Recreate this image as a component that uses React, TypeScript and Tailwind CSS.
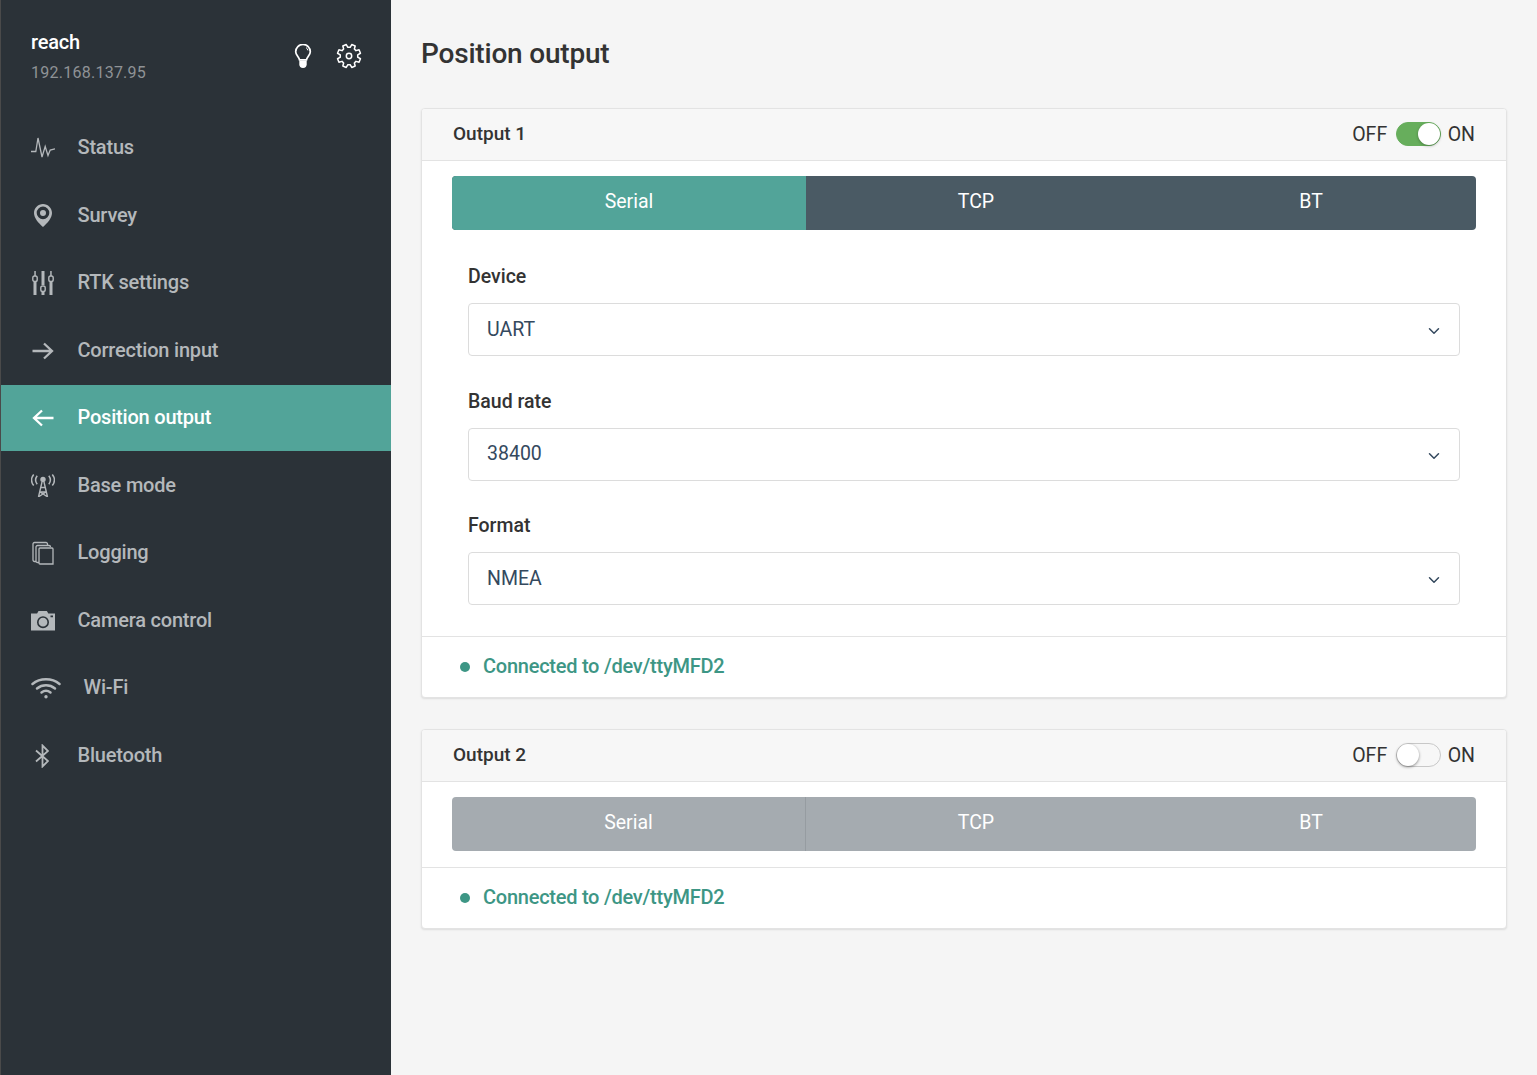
import { useState } from "react";
import { ChevronDown } from "lucide-react";

function PulseIcon() {
  return (
    <svg width="24" height="22" viewBox="0 0 24 22" fill="none" stroke="currentColor" strokeWidth="1.3">
      <path d="M0 14.5h4.800L7 1l4 19 3.200-10.500 2.800 9 2.200-5.500 4.800-1.200" />
    </svg>
  );
}

function PinIcon() {
  return (
    <svg width="18" height="23" viewBox="0 0 18 23" fill="currentColor">
      <path
        fillRule="evenodd"
        d="M9 0C4 0 0 4 0 9c0 5 4.500 10 9 14 4.500-4 9-9 9-14 0-5-4-9-9-9zm0 2.600a6.300 6.300 0 1 1 0 12.600A6.300 6.300 0 0 1 9 2.600zm0 3.300a3 3 0 1 0 0 6 3 3 0 0 0 0-6z"
      />
    </svg>
  );
}

function SlidersIcon() {
  return (
    <svg width="22" height="24" viewBox="0 0 22 24" fill="currentColor">
      <rect x="2.300" y="0" width="1.500" height="5" />
      <rect x="1.500" y="11" width="3" height="13" />
      <rect x="9.500" y="0" width="3" height="14" />
      <rect x="9.500" y="21" width="3" height="3" />
      <rect x="18.200" y="0" width="1.500" height="5" />
      <rect x="17.500" y="11" width="3" height="13" />
      <g fill="none" stroke="currentColor" strokeWidth="1.400">
        <rect x="0.800" y="5" width="4.400" height="5.500" rx="1.800" />
        <rect x="8.800" y="15" width="4.400" height="5.500" rx="1.800" />
        <rect x="16.800" y="5" width="4.400" height="5.500" rx="1.800" />
      </g>
    </svg>
  );
}

function TowerIcon() {
  return (
    <svg width="24" height="23" viewBox="0 0 24 23" fill="none" stroke="currentColor">
      <g strokeWidth="1.500">
        <path d="M2.700.5c-2.600 3.300-2.600 7.700 0 11" />
        <path d="M6.200 1.800c-1.900 2.500-1.900 6 0 8.500" />
        <path d="M21.300.5c2.600 3.300 2.600 7.700 0 11" />
        <path d="M17.800 1.800c1.900 2.500 1.900 6 0 8.500" />
      </g>
      <circle cx="12" cy="5.500" r="2.700" fill="currentColor" stroke="none" />
      <path d="M11 8 7.500 23M13 8l3.500 15M9.800 13.500h4.400M8.800 18h6.400M8 22.500l7-4.500M16 22.500l-7-4.500" strokeWidth="1.400" />
    </svg>
  );
}

function CopiesIcon() {
  return (
    <svg width="22" height="24" viewBox="0 0 22 24" fill="none" stroke="currentColor" strokeWidth="1.300">
      <path d="M4 20.500H2.500a1.500 1.500 0 0 1-1.500-1.500V3A1.500 1.500 0 0 1 2.500 1.500H14a1.500 1.500 0 0 1 1.500 1.500v1.500" />
      <path d="M7 21.500H5.500A1.500 1.500 0 0 1 4 20V6a1.500 1.500 0 0 1 1.500-1.500H17a1.500 1.500 0 0 1 1.500 1.500" />
      <path d="M8 7h12a1 1 0 0 1 1 1v15H8a1 1 0 0 1-1-1V8a1 1 0 0 1 1-1z" />
    </svg>
  );
}

function CameraIcon() {
  return (
    <svg width="24" height="20" viewBox="0 0 24 20" fill="currentColor">
      <path
        fillRule="evenodd"
        d="M7.500 0h8.400l1.400 2.500H24V19.500H0V2.500h6.100zM12 5.200a6 6 0 1 0 0 12 6 6 0 0 0 0-12zm0 1.600a4.400 4.400 0 1 1 0 8.800 4.400 4.400 0 0 1 0-8.800zM19.500 4.500v1.700h2.500V4.500z"
      />
    </svg>
  );
}

function WifiIcon() {
  return (
    <svg width="30" height="22" viewBox="0 0 30 22" fill="none" stroke="currentColor" strokeWidth="2.500" strokeLinecap="round">
      <path d="M1.500 7C9 .8 21 .8 28.500 7" />
      <path d="M6 11.500c5.200-4.200 12.800-4.200 18 0" />
      <path d="M10.500 15.500c2.800-2.200 6.200-2.200 9 0" />
      <circle cx="15" cy="19.800" r="1.700" fill="currentColor" stroke="none" />
    </svg>
  );
}

function BluetoothIcon() {
  return (
    <svg className="-ml-[2px]" width="14" height="24" viewBox="0 0 14 24" fill="none" stroke="currentColor" strokeWidth="1.800">
      <path d="M1 6.500 13 17l-5.500 5.500v-21L13 7 1 17.500" />
    </svg>
  );
}

function ArrowIcon({ left }: { left?: boolean }) {
  return (
    <svg width="22" height="18" viewBox="0 0 22 18" fill="none" stroke="currentColor" strokeWidth="2.300">
      {left ? <path d="M21.500 9H2M10 1.500 2 9l8 7.500" /> : <path d="M.5 9H20M12 1.500 20 9l-8 7.500" />}
    </svg>
  );
}

function BulbIcon() {
  return (
    <svg width="18" height="24" viewBox="0 0 18 24" fill="none" stroke="currentColor" strokeWidth="1.700">
      <path d="M5.500 15.800C4.800 12.800 1.700 11 1.700 7.700a7.300 7.300 0 0 1 14.600 0c0 3.300-3.100 5.100-3.800 8.100z" />
      <path d="M12 3.600c1 .6 1.700 1.600 1.900 2.800" strokeWidth="1" />
      <path d="M5.300 16.500h7.400v3.800a3.700 3.700 0 0 1-7.400 0z" fill="currentColor" stroke="none" />
    </svg>
  );
}

// 8 teeth, same outline as the reference's cog
function gearPath() {
  const pts: string[] = [];
  const at = (r: number, deg: number) => {
    const a = (deg * Math.PI) / 180;
    return `${(13 + r * Math.cos(a)).toFixed(2)} ${(13 + r * Math.sin(a)).toFixed(2)}`;
  };
  for (let i = 0; i < 8; i++) {
    const c = i * 45 + 22.5;
    pts.push(at(8.8, c - 15), at(11.8, c - 9), at(11.8, c + 9), at(8.8, c + 15));
  }
  return "M" + pts.join("L") + "Z";
}

function GearIcon() {
  return (
    <svg width="26" height="26" viewBox="0 0 26 26" fill="none" stroke="currentColor" strokeWidth="1.500" strokeLinejoin="round">
      <path d={gearPath()} />
      <circle cx="13" cy="13" r="2.700" />
    </svg>
  );
}

const navItems = [
  { label: "Status", icon: <PulseIcon /> },
  { label: "Survey", icon: <PinIcon /> },
  { label: "RTK settings", icon: <SlidersIcon /> },
  { label: "Correction input", icon: <ArrowIcon /> },
  { label: "Position output", icon: <ArrowIcon left />, active: true },
  { label: "Base mode", icon: <TowerIcon /> },
  { label: "Logging", icon: <CopiesIcon /> },
  { label: "Camera control", icon: <CameraIcon /> },
  { label: "Wi-Fi", icon: <WifiIcon />, wide: true },
  { label: "Bluetooth", icon: <BluetoothIcon /> },
];

function Sidebar() {
  return (
    <aside className="w-[391px] shrink-0 bg-[#2b3238] border-l border-[#4a4a4a] min-h-[1075px]">
      <div className="flex items-start justify-between pl-[30px] pr-[29px] h-[115px] pt-[30px]">
        <div>
          <div className="text-[20px] leading-[24px] font-medium text-white tracking-[-0.2px]">reach</div>
          <div className="mt-[7px] text-[16px] leading-[24px] text-[#8f9396] tracking-[0.25px]">192.168.137.95</div>
        </div>
        <div className="flex items-center gap-[24px] mt-[13px] text-white">
          <BulbIcon />
          <GearIcon />
        </div>
      </div>
      <nav className="flex flex-col gap-[1.5px]">
        {navItems.map((item) => (
          <div
            key={item.label}
            className={
              item.active
                ? "flex items-center h-[66px] pl-[30px] bg-[#52a499] text-white"
                : "flex items-center h-[66px] pl-[30px] text-[#b4b8bb]"
            }
          >
            <span className={item.wide ? "flex items-center w-[52.5px]" : "flex items-center justify-center w-[24px] mr-[22.5px]"}>
              {item.icon}
            </span>
            <span className="mb-[2px] text-[20px] leading-[24px] font-medium tracking-[-0.2px]">{item.label}</span>
          </div>
        ))}
      </nav>
    </aside>
  );
}

function Toggle({ on }: { on: boolean }) {
  return (
    <div className="flex items-center text-[19.5px] leading-[24px] text-[#333]">
      <span>OFF</span>
      <span
        className={
          on
            ? "relative ml-[9px] mr-[6.5px] mb-[2px] h-[24px] w-[45px] rounded-full border border-[#67ae5c] bg-[#67ae5c]"
            : "relative ml-[9px] mr-[6.5px] mb-[2px] h-[24px] w-[45px] rounded-full border border-[#c8c8c8] bg-[#f7f7f7]"
        }
      >
        <span
          className={
            on
              ? "absolute right-0 top-0 h-[22px] w-[22px] rounded-full bg-white shadow-[0_1px_3px_rgba(0,0,0,0.3)]"
              : "absolute left-0 top-0 h-[22px] w-[22px] rounded-full bg-white shadow-[0_1px_3px_rgba(0,0,0,0.45)]"
          }
        />
      </span>
      <span>ON</span>
    </div>
  );
}

function Tabs({ disabled }: { disabled?: boolean }) {
  if (disabled) {
    return (
      <div className="grid grid-cols-[354px_340px_1fr] h-[54px] rounded-[4px] overflow-hidden bg-[#a5abb0] text-white text-[19.5px]">
        <div className="flex items-center justify-center pb-[3px] border-r border-[#969ca1]">Serial</div>
        <div className="flex items-center justify-center pb-[3px]">TCP</div>
        <div className="flex items-center justify-center pb-[3px]">BT</div>
      </div>
    );
  }
  return (
    <div className="grid grid-cols-[354px_340px_1fr] h-[54px] rounded-[4px] overflow-hidden bg-[#4a5a64] text-white text-[19.5px]">
      <div className="flex items-center justify-center pb-[3px] bg-[#52a499]">Serial</div>
      <div className="flex items-center justify-center pb-[3px]">TCP</div>
      <div className="flex items-center justify-center pb-[3px]">BT</div>
    </div>
  );
}

function SelectField({ label, value }: { label: string; value: string }) {
  return (
    <div className="mb-[33.5px] last:mb-0">
      <div className="text-[19.5px] leading-[24px] font-medium text-[#333] mb-[14px]">{label}</div>
      <div className="flex items-center justify-between h-[53px] rounded-[4px] border border-[#dcdcdc] bg-white pl-[18px] pr-[16.5px] text-[19.5px] text-[#34495e]">
        <span>{value}</span>
        <ChevronDown size={18} strokeWidth={2} className="mt-[3px]" />
      </div>
    </div>
  );
}

function Status() {
  return (
    <div className="flex items-center h-[61px] border-t border-[#e3e3e3] pl-[38px] text-[#3d9685] text-[20px] font-medium tracking-[-0.25px]">
      <span className="w-[10px] h-[10px] rounded-full bg-[#3d9685] mr-[13px]" />
      <span className="mb-[2px]">Connected to /dev/ttyMFD2</span>
    </div>
  );
}

function Card({ title, on, children }: { title: string; on: boolean; children: React.ReactNode }) {
  return (
    <section className="border border-[#e3e3e3] rounded-[4px] bg-white shadow-[0_1px_2px_rgba(0,0,0,0.1)] overflow-hidden">
      <div className="flex items-center justify-between h-[52px] bg-[#f7f7f7] border-b border-[#e3e3e3] px-[31px]">
        <span className="text-[19px] font-medium text-[#333]">{title}</span>
        <Toggle on={on} />
      </div>
      {children}
    </section>
  );
}

export default function App() {
  const [output1] = useState(true);
  const [output2] = useState(false);

  return (
    <div className="flex min-h-[1075px] bg-[#f5f5f5] font-['Roboto',sans-serif]">
      <Sidebar />
      <main className="flex-1 pl-[30px] pr-[30px] pt-[33px]">
        <h1 className="text-[28px] leading-[42px] font-medium text-[#333] tracking-[-0.2px] mb-[33px]">Position output</h1>
        <Card title="Output 1" on={output1}>
          <div className="px-[30px] pt-[15px]">
            <Tabs />
          </div>
          <div className="px-[46px] pt-[35px] pb-[31px]">
            <SelectField label="Device" value="UART" />
            <SelectField label="Baud rate" value="38400" />
            <SelectField label="Format" value="NMEA" />
          </div>
          <Status />
        </Card>
        <div className="mt-[31px]">
          <Card title="Output 2" on={output2}>
            <div className="px-[30px] pt-[15px] pb-[16px]">
              <Tabs disabled />
            </div>
            <Status />
          </Card>
        </div>
      </main>
    </div>
  );
}
